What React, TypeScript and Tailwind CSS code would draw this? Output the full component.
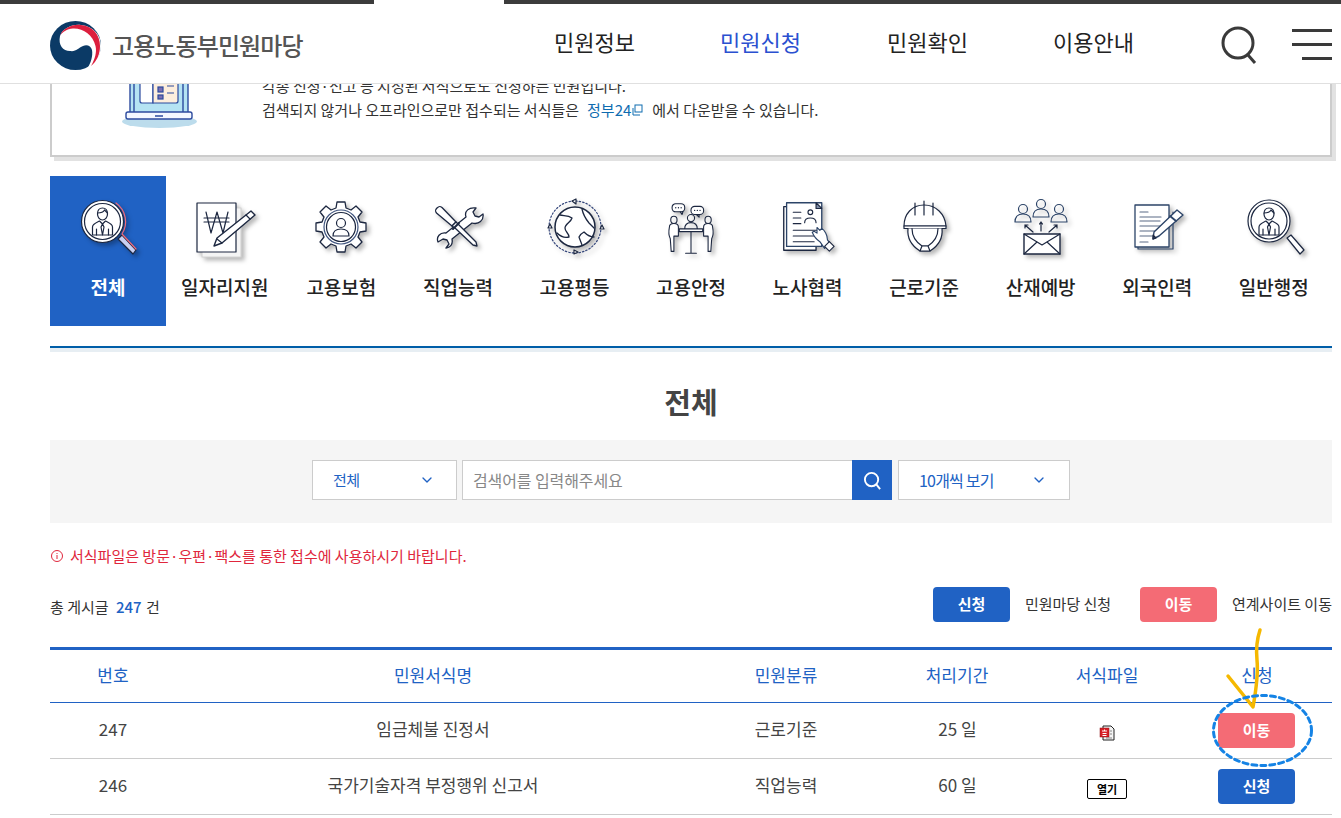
import { ChevronDown } from 'lucide-react'
import type { ReactNode } from 'react'

const ink = '#1c2740'

function Shape({ children }: { children: ReactNode }) {
  return (
    <svg viewBox="0 0 64 64" className="w-16 h-16 drop-shadow-[3px_3px_2px_rgba(0,0,0,0.28)]" fill="none" stroke={ink} strokeWidth="1.2" strokeLinejoin="round" strokeLinecap="round">
      {children}
    </svg>
  )
}

function Person({ x, y, s = 1 }: { x: number; y: number; s?: number }) {
  return (
    <g transform={`translate(${x} ${y}) scale(${s})`}>
      <path d="M-5-9c0-4 2-6 5-6s5 2 5 6c0 3-2 6-5 6s-5-3-5-6z" />
      <path d="M-5-10c3 0 6-1 7-3 1 1 2 2 3 3" />
      <path d="M-10 12V4c0-3 3-4 7-6l3 3 3-3c4 2 7 3 7 6v8z" />
      <path d="M0 1l-1.500 3 1.500 8 1.500-8zM-6 6v6M6 6v6" />
    </g>
  )
}

function MagnifierActive() {
  return (
    <Shape>
      <path d="M42 43l4-4 14 15-3 4z" fill="#c9d0f2" />
      <path d="M40 7A23 23 0 0 1 46 38L60 53" stroke="#ef6a78" />
      <circle cx="26.500" cy="25.500" r="21" fill="#fff" />
      <circle cx="26.500" cy="25.500" r="18" />
      <Person x={26.500} y={27} />
    </Shape>
  )
}

function MagnifierPlain() {
  return (
    <Shape>
      <path d="M45 42l4-3 13 15-4 4z" fill="#fff" />
      <circle cx="27" cy="25" r="21" fill="#fff" />
      <circle cx="27" cy="25" r="18" />
      <Person x={27} y={27} />
    </Shape>
  )
}

function WonDoc() {
  return (
    <Shape>
      <rect x="9" y="12" width="39" height="49" stroke="#d4d4d4" fill="#f4f4f4" />
      <rect x="4" y="7" width="39" height="49" fill="#fff" />
      <path d="M13 16l5 21 6-21 6 21 5-21M11 22h25M11 26h25" />
      <path d="M58 15l4 4-33 28-8 3 3-8z" fill="#fff" strokeWidth="1.400" />
      <path d="M24 43l5 4M53 19l4 4" />
    </Shape>
  )
}

function GearPerson() {
  return (
    <Shape>
      <path d="M28 6h8l1 6 5 2 5-4 6 6-4 5 2 5 6 1v8l-6 1-2 5 4 5-6 6-5-4-5 2-1 6h-8l-1-6-5-2-5 4-6-6 4-5-2-5-6-1v-8l6-1 2-5-4-5 6-6 5 4 5-2z" fill="#fff" strokeWidth="1.300" />
      <circle cx="32" cy="31" r="17" stroke="#40557f" />
      <circle cx="32" cy="31" r="14.500" />
      <circle cx="32" cy="27" r="4.500" />
      <path d="M24 40c0-5 3-7 8-7s8 2 8 7z" />
    </Shape>
  )
}

function Tools() {
  return (
    <Shape>
      <path d="M50 12L47 16L49 20L53 21L57 18C58 24 53 29 46 27L26 43C27 48 25 51 20 52L23 48L21 44L17 43L12 46C10 41 14 36 20 37L40 21C38 15 43 11 50 12Z" fill="#fff" strokeWidth="1.300" />
      <path d="M10.500 17C9 15 9 14 11 12C13 10 14 10 16 11.500L30 26L26 30Z" fill="#fff" strokeWidth="1.300" />
      <path d="M30 26L33 29L50 46L51 50L47 49L29 32L26 30Z" fill="#fff" strokeWidth="1.300" />
      <path d="M27 33l6-6" strokeWidth="2" />
    </Shape>
  )
}

function Globe() {
  return (
    <Shape>
      <circle cx="33" cy="31" r="26" stroke="#33457a" strokeDasharray="1.500 2" />
      <circle cx="33" cy="31" r="20" fill="#fff" strokeWidth="1.500" />
      <path d="M18 19c4 1 8 0 12 3-1 4-7 6-7 10 0 4 4 5 4 9-4 1-9-1-12-4M40 13c1 5 3 9 7 14 2 2 3 3 5 5M52 41c-3 0-6-1-10-5-2 1-4 3-5 5 1 3 2 5 3 8" strokeWidth="1.300" />
      <path d="M30 5l4-2v5zM6 32l4 0-2-4zM58 33l4 0-2-4zM32 58l4-2-4-2z" fill="#fff" />
    </Shape>
  )
}

function Meeting() {
  return (
    <Shape>
      <g transform="translate(3.200 5) scale(0.9)">
        <rect x="11" y="3" width="14" height="9" rx="4" fill="#fff" />
        <path d="M20 12l2 3 1-3" />
        <rect x="32" y="6" width="14" height="9" rx="4" fill="#fff" />
        <path d="M38 15l3 3 0-3" />
        <path d="M15 7.500h.100M18 7.500h.100M21 7.500h.100M36 10.500h.100M39 10.500h.100M42 10.500h.100" strokeWidth="1.400" />
        <circle cx="32" cy="19" r="4" />
        <path d="M25 31c0-5 3-7 7-7s7 2 7 7" />
        <path d="M19 31h26v3H19zM32 34v24M26 58h12" fill="#fff" />
        <ellipse cx="13" cy="21" rx="3.500" ry="4" />
        <ellipse cx="51" cy="21" rx="3.500" ry="4" />
        <path d="M8 29c0-3 2-4 5-4s5 1 5 4v10h-5v17h-3l-1-14c-2-4-2-8-1-13z" fill="#fff" />
        <path d="M56 29c0-3-2-4-5-4s-5 1-5 4v10h5v17h3l1-14c2-4 2-8 1-13z" fill="#fff" />
      </g>
    </Shape>
  )
}

function DocHand() {
  return (
    <Shape>
      <g transform="translate(3 2) scale(0.95)">
        <rect x="5" y="9" width="34" height="46" fill="#fff" strokeWidth="1.400" />
        <path d="M8 5h35l2 0v46H8z" fill="#fff" stroke="#2c4468" strokeWidth="1.400" />
        <path d="M39 5l6 6h-6z" fill="#7f8da8" />
        <path d="M15 15h8M15 21h8M15 27h8M15 34h25M15 40h22M15 46h22" />
        <circle cx="33" cy="15" r="2.500" />
        <path d="M27 26c0-4 2-5 6-5s6 1 6 5" />
        <path d="M40 31l3 3 2-2c3 2 6 7 6 12l3 4-6 5-5-7c-3-2-6-5-8-10l2-1 3 2z" fill="#fff" stroke="#2c4468" />
        <path d="M53 46l5 5-5 5-5-5z" fill="#fff" />
      </g>
    </Shape>
  )
}

function Helmet() {
  return (
    <Shape>
      <path d="M12 30C12 18 20 9 32 9s21 9 22 21z" fill="#fff" />
      <path d="M23 7v12M32 5v14M41 7v12" />
      <path d="M12 30h42v2.500H12z" fill="#fff" />
      <path d="M16 32.500C15 42 20 50 28 55h10c8-5 13-13 12-22.500" fill="#fff" />
      <path d="M20 32.500C20 40 24 46 30 50h6c6-4 10-10 10-17.500" />
      <path d="M28 55l2-5h6l2 5z" fill="#fff" />
    </Shape>
  )
}

function MailPeople() {
  return (
    <Shape>
      <circle cx="14" cy="13" r="4.500" stroke="#2c4468" />
      <path d="M6 26c0-5 3-8 8-8s8 3 8 8z" stroke="#2c4468" />
      <circle cx="32" cy="8" r="4.500" stroke="#2c4468" />
      <path d="M24 21c0-5 3-8 8-8s8 3 8 8z" stroke="#2c4468" />
      <circle cx="50" cy="13" r="4.500" stroke="#2c4468" />
      <path d="M42 26c0-5 3-8 8-8s8 3 8 8z" stroke="#2c4468" />
      <path d="M24 36l-8-7M16 29v3M16 29h3M32 35v-9M32 26l-1.500 2M32 26l1.500 2M40 36l8-7M48 29v3M48 29h-3" />
      <rect x="15" y="38" width="36" height="20" fill="#fff" strokeWidth="1.400" />
      <path d="M15 38l18 11 18-11M15 58l13-12M51 58L38 46" />
    </Shape>
  )
}

function DocPen() {
  return (
    <Shape>
      <path d="M13 13v40h35V16" stroke="#2c4468" />
      <rect x="10" y="9" width="34" height="42" fill="#fff" stroke="#2c4468" strokeWidth="1.300" />
      <path d="M15 16h8M15 21h21M15 25h20M15 30h22M15 35h18M15 40h12M15 46h8" stroke="#5b6a86" />
      <path d="M52 14l6 5-24 21-6 3 1-7z" fill="#fff" stroke="#2c4468" strokeWidth="1.400" />
      <path d="M45 20l6 5" stroke="#2c4468" strokeWidth="1.800" />
      <path d="M28 43l0-4 3 3z" fill="#2c4468" />
    </Shape>
  )
}

const tabs = [
  { label: '전체', icon: <MagnifierActive /> },
  { label: '일자리지원', icon: <WonDoc /> },
  { label: '고용보험', icon: <GearPerson /> },
  { label: '직업능력', icon: <Tools /> },
  { label: '고용평등', icon: <Globe /> },
  { label: '고용안정', icon: <Meeting /> },
  { label: '노사협력', icon: <DocHand /> },
  { label: '근로기준', icon: <Helmet /> },
  { label: '산재예방', icon: <MailPeople /> },
  { label: '외국인력', icon: <DocPen /> },
  { label: '일반행정', icon: <MagnifierPlain /> },
]

function Logo() {
  return (
    <svg viewBox="0 0 51 49" className="w-[51px] h-[49px] shrink-0">
      <ellipse cx="25.500" cy="24.500" rx="25.500" ry="24.500" fill="#0b3a66" />
      <path d="M10 15C13 7 22 3 31 4C43 5 51 14 51 25C51 35 46 43 37 48C41 42 43 35 42 29C41 25 37 23 33 25C28 27 26 31 20 30C13 30 8 24 10 15Z" fill="#fff" />
      <path d="M10 15C13 7 22 3 31 4C43 5 50 14 50 25C50 33 47 40 41 45C45 38 47 31 45.500 25C43 14 33 7 23 7.500C17 8 12 11 10 15Z" fill="#dc1f3e" />
    </svg>
  )
}

function Laptop() {
  return (
    <svg viewBox="0 0 76 60" className="w-[76px] h-[60px] shrink-0" fill="none" stroke="#2c4a9e" strokeWidth="1.200">
      <ellipse cx="37.500" cy="51.500" rx="37.500" ry="6.500" fill="#bcdcec" stroke="none" />
      <rect x="8" y="0" width="58" height="43" fill="#b5e3f3" strokeWidth="1.400" />
      <path d="M12 0v43M61 0v43" strokeWidth="1.400" />
      <path d="M18 0h13v33H20q-2 0-2-2z" fill="#fff" />
      <path d="M31 0h25v31q0 2-2 2H31z" fill="#fdeedd" />
      <rect x="36" y="17" width="5" height="5" fill="#7c6fb0" />
      <rect x="36" y="25" width="5" height="4" fill="#7c6fb0" />
      <path d="M45 16h7M45 23h7" />
      <rect x="4" y="42" width="66" height="7" rx="2" fill="#f4f7ff" strokeWidth="1.400" />
      <path d="M33 46h8" strokeWidth="1.500" />
    </svg>
  )
}

function Badge({ kind }: { kind: 'go' | 'apply' }) {
  if (kind === 'go') {
    return <a className="inline-flex w-[77px] h-[35px] items-center justify-center rounded-[4px] bg-[#f46b75] text-white text-[15px] font-bold">이동</a>
  }
  return <a className="inline-flex w-[77px] h-[35px] items-center justify-center rounded-[4px] bg-[#2062c4] text-white text-[15px] font-bold">신청</a>
}

function HwpIcon() {
  return (
    <svg viewBox="0 0 16 16" className="w-4 h-4 inline-block">
      <path d="M4 1h8l3 3v11H4z" fill="#f4f4f4" stroke="#222" strokeWidth="1" />
      <path d="M11 6h2M11 9h2M7 13h6" stroke="#888" strokeWidth="1" />
      <rect x="1" y="3" width="9" height="9" fill="#d81f26" stroke="#8c1117" strokeWidth="0.500" />
      <path d="M3 6h5M5.500 4.500V6M3.500 8.500h4M3.500 10.500h4" stroke="#fff" strokeWidth="1" />
    </svg>
  )
}

export default function App() {
  return (
    <div className="relative h-[818px] overflow-hidden bg-white text-[#333] font-['Noto_Sans_CJK_KR','Noto_Sans',sans-serif]">
      <header className="relative z-10 h-[84px] bg-white border-b border-[#e0e0e0]">
        <div className="flex h-1">
          <div className="w-[374px] bg-[#3c3c3c]" />
          <div className="w-[130px]" />
          <div className="flex-1 bg-[#3c3c3c]" />
        </div>
        <div className="flex items-center pl-[50px] h-[79px]">
          <div className="flex items-center w-[504px] gap-[11px] mt-[3px]">
            <Logo />
            <span className="text-[24px] font-medium text-[#555] tracking-[-0.9px]">고용노동부민원마당</span>
          </div>
          <nav className="flex -mt-[5px] text-[22px] text-[#222]">
            <a className="w-[166px]">민원정보</a>
            <a className="w-[167px] text-[#2a50d0]">민원신청</a>
            <a className="w-[166px]">민원확인</a>
            <a className="w-[167px]">이용안내</a>
          </nav>
          <svg viewBox="0 0 40 40" className="w-10 h-10 mt-[5px]" fill="none" stroke="#3a3a3a" strokeWidth="3">
            <circle cx="18" cy="17" r="15" />
            <path d="M28 29l7 8" />
          </svg>
          <div className="flex flex-col items-end gap-[11px] w-10 ml-[32px] mt-px">
            <span className="block w-10 h-[3px] bg-[#3a3a3a]" />
            <span className="block w-10 h-[3px] bg-[#3a3a3a]" />
            <span className="block w-[30px] h-[3px] bg-[#3a3a3a]" />
          </div>
        </div>
      </header>

      <main className="ml-[50px] w-[1282px]">
        <section className="-mt-[24px] h-[97px] border-2 border-[#ccc] shadow-[4px_4px_0_#e2e2e2] flex items-start pt-2 pl-[70px] bg-white">
          <Laptop />
          <div className="ml-[64px] mt-[4px] text-[15px] leading-6 text-[#333]">
            <p>각종 신청·신고 등 지정된 서식으로도 신청하는 민원입니다.</p>
            <p className="flex items-center">
              검색되지 않거나 오프라인으로만 접수되는 서식들은
              <a className="ml-2 text-[#0f6cb0] flex items-center">
                정부24
                <svg viewBox="0 0 12 12" className="w-3 h-3" fill="none" stroke="#0f6cb0" strokeWidth="1">
                  <rect x="4" y="1" width="7" height="7" />
                  <path d="M2 4v7h7" />
                </svg>
              </a>
              <span className="ml-[9px]">에서 다운받을 수 있습니다.</span>
            </p>
          </div>
        </section>

        <ul className="mt-[19px] grid grid-cols-[repeat(11,minmax(0,1fr))] h-[150px]">
          {tabs.map((tab, index) => (
            <li
              key={tab.label}
              className={index === 0
                ? 'w-[116px] flex flex-col items-center pt-5 bg-[#2062c4] text-white font-bold'
                : 'flex flex-col items-center pt-5 text-[#222] font-medium'}
            >
              {tab.icon}
              <span className="mt-[13px] text-[19px] leading-7 whitespace-nowrap">{tab.label}</span>
            </li>
          ))}
        </ul>

        <div className="mt-5 h-[6px] border-t-2 border-[#005ea8] bg-[#e7eef3]" />

        <h2 className="mt-[29px] h-10 text-center text-[29px] leading-10 font-bold text-[#444]">전체</h2>

        <div className="mt-[19px] h-[83px] bg-[#f5f5f5] flex items-center justify-center gap-[5px] pb-[3px]">
          <div className="w-[145px] h-10 flex items-center justify-between pl-5 pr-[21px] bg-white border border-[#ccc] text-[#2062c4] text-[15px] tracking-[-0.5px]">
            전체
            <ChevronDown className="w-4 h-4" />
          </div>
          <div className="flex w-[430px] h-10">
            <div className="flex-1 flex items-center pl-[10px] bg-white border border-[#ccc] border-r-0 text-[#888] text-[16px] tracking-[-0.1px]">검색어를 입력해주세요</div>
            <button className="w-10 h-10 flex items-center justify-center bg-[#2062c4]">
              <svg viewBox="0 0 20 20" className="w-[19px] h-[19px]" fill="none" stroke="#fff" strokeWidth="2">
                <circle cx="9" cy="9" r="7" />
                <path d="M14 14l4 5" />
              </svg>
            </button>
          </div>
          <div className="ml-px w-[172px] h-10 flex items-center justify-between pl-5 pr-[22px] bg-white border border-[#ccc] text-[#2062c4] text-[16px] tracking-[-0.8px]">
            10개씩 보기
            <ChevronDown className="w-4 h-4" />
          </div>
        </div>

        <p className="mt-[21px] h-6 flex items-center gap-[6px] text-[15px] text-[#e0263c]">
          <svg viewBox="0 0 14 14" className="w-[14px] h-[14px]" fill="none" stroke="#e0263c" strokeWidth="1">
            <circle cx="7" cy="7" r="5.500" />
            <path d="M7 6v4M7 4v1" />
          </svg>
          서식파일은 방문·우편·팩스를 통한 접수에 사용하시기 바랍니다.
        </p>

        <div className="mt-[19px] h-[35px] flex items-center justify-between text-[15px]">
          <p className="mt-[5px]">
            총 게시글 <span className="ml-[4px] mr-px text-[#2062c4] font-medium">247</span> 건
          </p>
          <div className="flex items-center">
            <Badge kind="apply" />
            <span className="ml-[15px] w-[115px]">민원마당 신청</span>
            <Badge kind="go" />
            <span className="ml-[15px] w-[100px] whitespace-nowrap">연계사이트 이동</span>
          </div>
        </div>

        <table className="mt-[25px] w-full table-fixed border-t-[3px] border-[#2062c4] text-center text-[17px] text-[#444]">
          <colgroup>
            <col className="w-[126px]" />
            <col className="w-[514px]" />
            <col className="w-[192px]" />
            <col className="w-[150px]" />
            <col className="w-[150px]" />
            <col className="w-[150px]" />
          </colgroup>
          <thead className="text-[#2062c4]">
            <tr className="h-[54px] border-b border-[#2062c4]">
              <th className="font-normal pb-[2px]">번호</th>
              <th className="font-normal pb-[2px]">민원서식명</th>
              <th className="font-normal pb-[2px]">민원분류</th>
              <th className="font-normal pb-[2px]">처리기간</th>
              <th className="font-normal pb-[2px]">서식파일</th>
              <th className="font-normal pb-[2px]">신청</th>
            </tr>
          </thead>
          <tbody>
            <tr className="h-[56px] border-b border-[#ccc]">
              <td className="pb-[3px]">247</td>
              <td className="pb-[3px]">임금체불 진정서</td>
              <td className="pb-[3px]">근로기준</td>
              <td className="pb-[3px] pl-px">25 일</td>
              <td><HwpIcon /></td>
              <td className="pr-px"><Badge kind="go" /></td>
            </tr>
            <tr className="h-[56px] border-b border-[#ccc]">
              <td className="pb-[3px]">246</td>
              <td className="pb-[3px]">국가기술자격 부정행위 신고서</td>
              <td className="pb-[3px]">직업능력</td>
              <td className="pb-[3px] pl-px">60 일</td>
              <td>
                <span className="inline-flex w-10 h-5 items-center justify-center border border-black rounded-[2px] text-[11px] font-bold text-black">열기</span>
              </td>
              <td className="pr-px"><Badge kind="apply" /></td>
            </tr>
          </tbody>
        </table>
      </main>

      {/* hand drawn markup on top of the capture */}
      <svg viewBox="0 0 120 150" className="absolute left-[1205px] top-[625px] w-[120px] h-[150px]" fill="none">
        <path d="M55 5c-3 9-4 20-3 30 1 10 0 25-4 47L23 51" stroke="#f5b800" strokeWidth="3.500" strokeLinecap="round" strokeLinejoin="round" />
        <ellipse cx="57.500" cy="105.500" rx="49" ry="35" stroke="#1583e5" strokeWidth="3" strokeDasharray="5 4" strokeLinecap="round" />
      </svg>
    </div>
  )
}
